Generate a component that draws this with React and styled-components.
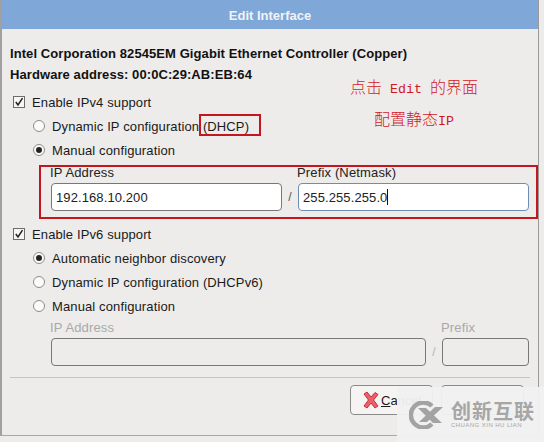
import React from "react";
import styled, { createGlobalStyle } from "styled-components";

const Global = createGlobalStyle`
  html, body { margin: 0; padding: 0; background: #edecea; }
  body { font-family: "Liberation Sans", Arial, sans-serif; font-size: 13px; color: #1a1a1a; }
`;

const Page = styled.div`
  position: relative;
  width: 544px;
  height: 442px;
  overflow: hidden;
  background: #edecea;
`;

const Dialog = styled.div`
  width: 539px;
  height: 436px;
  box-sizing: border-box;
  border-left: 2px solid #a0a0a0;
  border-right: 1px solid #9a9a9a;
  border-bottom: 1px solid #a8a8a8;
  display: flex;
  flex-direction: column;
`;

const TitleBar = styled.div`
  height: 29px;
  flex: none;
  background: #7fa7d8;
  color: #f0f3f6;
  font-weight: bold;
  font-size: 13px;
  padding-top: 1px;
  box-sizing: border-box;
  display: flex;
  align-items: center;
  justify-content: center;
`;

const Body = styled.div`
  padding: 14px 8px 0 8px;
  display: flex;
  flex-direction: column;
`;

const Heading = styled.div`
  font-weight: bold;
  font-size: 13px;
  letter-spacing: 0.08px;
  height: 21px;
  line-height: 21px;
  color: #111;
  white-space: nowrap;
`;

const Row = styled.div`
  height: 24px;
  display: flex;
  align-items: center;
  gap: 7px;
  padding-left: ${(p) => p.$indent || 0}px;
  font-size: 13px;
  letter-spacing: 0.12px;
  white-space: nowrap;
`;

const CheckBox = styled.span`
  width: 12px;
  height: 12px;
  box-sizing: border-box;
  margin-left: 3px;
  border: 1px solid #6d6d6d;
  background: #f6f6f6;
  display: flex;
  align-items: center;
  justify-content: center;
`;

const Radio = styled.span`
  width: 12px;
  height: 12px;
  box-sizing: border-box;
  border-radius: 50%;
  border: 1px solid #8b8b8b;
  background: #fbfbfb;
  display: flex;
  align-items: center;
  justify-content: center;
  &::after {
    content: "";
    display: ${(p) => (p.$on ? "block" : "none")};
    width: 6px;
    height: 6px;
    border-radius: 50%;
    background: #222;
  }
`;

const FieldGrid = styled.div`
  display: grid;
  grid-template-columns: ${(p) => p.$columns};
  padding-left: 41px;
  height: ${(p) => p.$height}px;
  align-content: start;
`;

const FieldLabel = styled.div`
  height: 17px;
  line-height: 14px;
  margin-left: -1px;
  font-size: 13px;
  letter-spacing: 0.15px;
  color: ${(p) => (p.$off ? "#a9a9a9" : "#222")};
  white-space: nowrap;
`;

const Input = styled.div`
  height: 28px;
  box-sizing: border-box;
  border-radius: 4px;
  border: 1px solid ${(p) => (p.$focus ? "#6f8db3" : "#777")};
  background: ${(p) => (p.$off ? "#edecea" : "#fff")};
  font-size: 13px;
  letter-spacing: 0.1px;
  padding-left: 4px;
  color: #222;
  display: flex;
  align-items: center;
`;

const Caret = styled.span`
  width: 1px;
  height: 16px;
  background: #111;
`;

const Slash = styled.div`
  height: 28px;
  line-height: 28px;
  text-align: center;
  font-size: 12px;
  color: ${(p) => (p.$off ? "#b5b5b5" : "#555")};
`;

const Gap = styled.div`
  height: ${(p) => p.$h}px;
`;

const Divider = styled.div`
  height: 1px;
  background: #c4c4c4;
  margin-top: 11px;
`;

const Buttons = styled.div`
  display: flex;
  justify-content: flex-end;
  gap: 8px;
  margin-top: 7px;
  padding-right: 6px;
`;

const Button = styled.div`
  width: 83px;
  height: 30px;
  box-sizing: border-box;
  border: 1px solid #8a8a8a;
  border-radius: 4px;
  background: #f5f4f3;
  display: flex;
  align-items: center;
  padding-left: 12px;
  gap: 2px;
  font-size: 13px;
`;

const Underline = styled.span`
  text-decoration: underline;
`;

const Box = styled.span`
  position: absolute;
  border: 2px solid #c4161e;
  box-sizing: border-box;
  left: ${(p) => p.$x}px;
  top: ${(p) => p.$y}px;
  width: ${(p) => p.$w}px;
  height: ${(p) => p.$h}px;
`;

const Note = styled.span`
  position: absolute;
  left: ${(p) => p.$x}px;
  top: ${(p) => p.$y}px;
  color: #d0191f;
  font-family: "Noto Sans CJK SC", "Liberation Mono", monospace;
  font-size: 16px;
  font-weight: 300;
  line-height: 18px;
  white-space: pre;
`;

const Mono = styled.span`
  font-family: "Liberation Mono", monospace;
  font-size: 13.33px;
`;

const Watermark = styled.div`
  position: absolute;
  left: 397px;
  top: 387px;
  width: 147px;
  height: 55px;
  background: rgba(240, 240, 240, 0.96);
  display: flex;
  align-items: center;
  gap: 7px;
  padding: 0 0 0 12px;
  box-sizing: border-box;
`;

const MarkText = styled.div`
  display: flex;
  flex-direction: column;
  color: #a6a6a6;
`;

const MarkTitle = styled.span`
  font-family: "Noto Sans CJK SC", sans-serif;
  font-weight: bold;
  font-size: 20px;
  line-height: 22px;
  letter-spacing: 1px;
`;

const MarkSub = styled.span`
  font-size: 6px;
  line-height: 7px;
  letter-spacing: 0.45px;
  white-space: nowrap;
`;

const CheckIcon = () => (
  <svg width="10" height="10" viewBox="0 0 10 10">
    <path d="M1.8 5 L4 8 L8.5 1.2" fill="none" stroke="#222" strokeWidth="1.5" />
  </svg>
);

const CancelIcon = () => (
  <svg width="16" height="18" viewBox="0 0 16 18">
    <path
      d="M1 3 L4 1 L8 6 L12 1.5 L15 3.5 L10.5 9 L15 15 L12 17 L8 12 L4 17 L1 15 L5.5 9 Z"
      fill="#e8626a"
      stroke="#c9303a"
      strokeWidth="1"
    />
  </svg>
);

const MarkLogo = () => (
  <svg width="35" height="28" viewBox="0 0 35 28">
    <path d="M23 5 A12.5 12.5 0 1 0 23 23" fill="none" stroke="#a3a3a3" strokeWidth="4.5" />
    <path d="M9 7 L17 7 L33 22 L24 22 Z" fill="#a3a3a3" />
    <path d="M34 6 L26 6 L10 21 L18 21 Z" fill="#a3a3a3" />
  </svg>
);

export default function App() {
  return (
    <Page>
      <Global />
      <Dialog>
        <TitleBar>Edit Interface</TitleBar>
        <Body>
          <Heading>Intel Corporation 82545EM Gigabit Ethernet Controller (Copper)</Heading>
          <Heading>Hardware address: 00:0C:29:AB:EB:64</Heading>
          <Gap $h={5} />
          <Row>
            <CheckBox><CheckIcon /></CheckBox>
            Enable IPv4 support
          </Row>
          <Row $indent={23}>
            <Radio />
            Dynamic IP configuration (DHCP)
          </Row>
          <Row $indent={23}>
            <Radio $on />
            Manual configuration
          </Row>
          <Gap $h={4} />
          <FieldGrid $columns="231px 16px 231px" $height={56}>
            <FieldLabel>IP Address</FieldLabel>
            <span />
            <FieldLabel>Prefix (Netmask)</FieldLabel>
            <Input>192.168.10.200</Input>
            <Slash>/</Slash>
            <Input $focus>255.255.255.0<Caret /></Input>
          </FieldGrid>
          <Row>
            <CheckBox><CheckIcon /></CheckBox>
            Enable IPv6 support
          </Row>
          <Row $indent={23}>
            <Radio $on />
            Automatic neighbor discovery
          </Row>
          <Row $indent={23}>
            <Radio />
            Dynamic IP configuration (DHCPv6)
          </Row>
          <Row $indent={23}>
            <Radio />
            Manual configuration
          </Row>
          <Gap $h={3} />
          <FieldGrid $columns="375px 16px 87px" $height={45}>
            <FieldLabel $off>IP Address</FieldLabel>
            <span />
            <FieldLabel $off>Prefix</FieldLabel>
            <Input $off />
            <Slash $off>/</Slash>
            <Input $off />
          </FieldGrid>
          <Divider />
          <Buttons>
            <Button>
              <CancelIcon />
              <span><Underline>C</Underline>ancel</span>
            </Button>
            <Button />
          </Buttons>
        </Body>
      </Dialog>

      <Box $x={199} $y={114} $w={62} $h={22} />
      <Box $x={39} $y={165} $w={499} $h={54} />
      <Note $x={350} $y={77}>点击<Mono> Edit </Mono>的界面</Note>
      <Note $x={374} $y={109}>配置静态<Mono>IP</Mono></Note>

      <Watermark>
        <MarkLogo />
        <MarkText>
          <MarkTitle>创新互联</MarkTitle>
          <MarkSub>CHUANG XIN HU LIAN</MarkSub>
        </MarkText>
      </Watermark>
    </Page>
  );
}
